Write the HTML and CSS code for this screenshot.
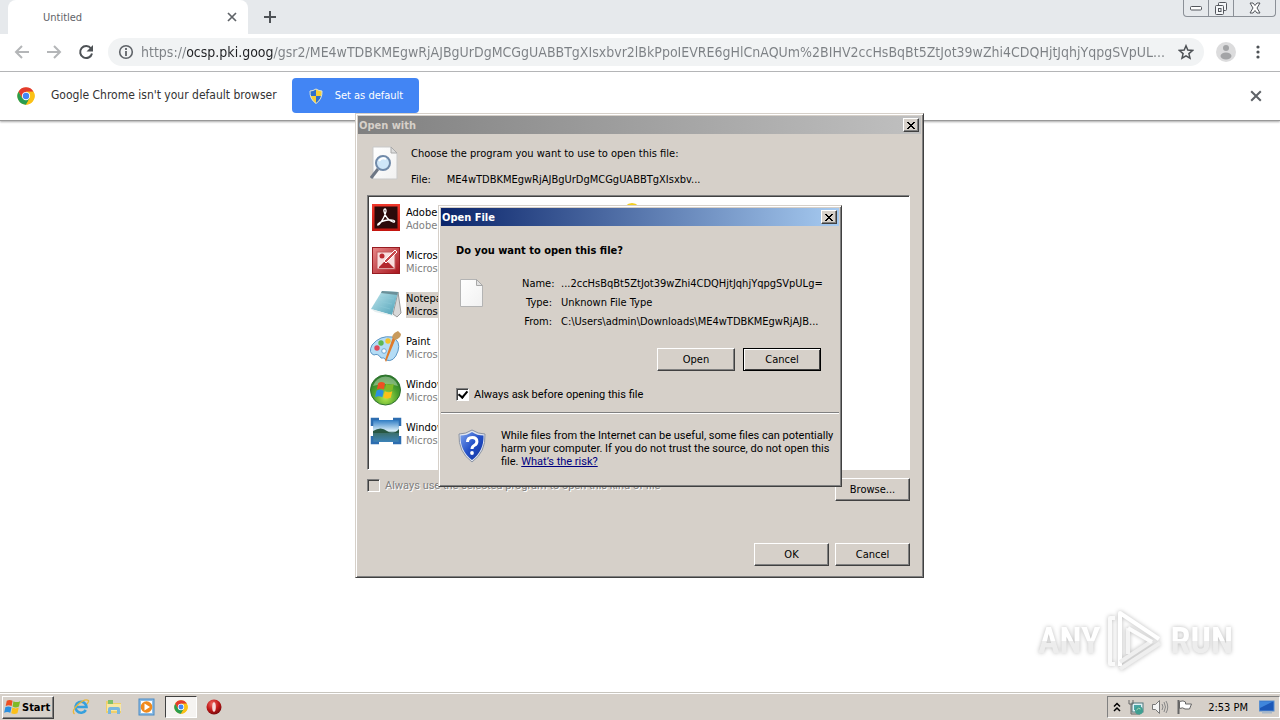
FILE: index.html
```html
<!DOCTYPE html>
<html lang="en">
<head>
<meta charset="utf-8">
<title>Untitled</title>
<link rel="stylesheet" href="styles.css">
</head>
<body>
<svg class="defs" aria-hidden="true">
  <defs>
    <linearGradient id="pdfRed" x1="0" y1="0" x2="0" y2="1"><stop offset="0" stop-color="#f0382c"/><stop offset="1" stop-color="#c4150f"/></linearGradient>
    <linearGradient id="officeRed" x1="0" y1="0" x2="1" y2="1"><stop offset="0" stop-color="#e8898a"/><stop offset="1" stop-color="#a8141c"/></linearGradient>
    <linearGradient id="pad" x1="0" y1="0" x2="1" y2="1"><stop offset="0" stop-color="#c3e8ee"/><stop offset="1" stop-color="#4b9fb6"/></linearGradient>
    <radialGradient id="orb" cx=".5" cy=".75" r=".7"><stop offset="0" stop-color="#b6e84e"/><stop offset=".6" stop-color="#4aa02c"/><stop offset="1" stop-color="#2b7a2a"/></radialGradient>
    <linearGradient id="sky" x1="0" y1="0" x2="0" y2="1"><stop offset="0" stop-color="#2e7cc4"/><stop offset=".5" stop-color="#d9eef8"/><stop offset=".58" stop-color="#3b6f6a"/><stop offset="1" stop-color="#3c83b8"/></linearGradient>
    <linearGradient id="shieldBlue" x1="0" y1="0" x2="1" y2="1"><stop offset="0" stop-color="#7fa4ee"/><stop offset=".5" stop-color="#2350c8"/><stop offset="1" stop-color="#12309a"/></linearGradient>
    <linearGradient id="paper" x1="0" y1="0" x2="1" y2="1"><stop offset="0" stop-color="#fff"/><stop offset="1" stop-color="#f1f1f1"/></linearGradient>
    <radialGradient id="opera" cx=".4" cy=".3" r=".7"><stop offset="0" stop-color="#f06a62"/><stop offset=".6" stop-color="#c01818"/><stop offset="1" stop-color="#7c0a0c"/></radialGradient>
    <symbol id="chrome" viewBox="0 0 48 48">
      <circle cx="24" cy="24" r="23" fill="#fbc116"/>
      <path d="M4 12.500A23 23 0 0 1 44 12.500H24L14 30Z" fill="#e33b2e"/>
      <path d="M4 12.500A23 23 0 0 0 24 47L34 30H14Z" fill="#2a9d4f"/>
      <path d="M24 12.500H44A23 23 0 0 1 24 47L34 30Z" fill="#fbc116"/>
      <circle cx="24" cy="24" r="11" fill="#fff"/><circle cx="24" cy="24" r="8.500" fill="#4386f5"/>
    </symbol>
    <symbol id="flag" viewBox="0 0 20 18">
      <path d="M3 2Q6 0 9.500 2L8.500 8Q5 6 1.800 8Z" fill="#ee4f22"/>
      <path d="M10.500 2.500Q14 4.500 18 2.500L16.700 8.500Q13 10.500 9.500 8.500Z" fill="#7fba28"/>
      <path d="M1.500 9Q5 7.500 8.300 9.200L7 15.500Q3.500 13.500 0 15.500Z" fill="#2a8fe0"/>
      <path d="M9.300 9.700Q13 11.500 16.500 9.700L15 16Q11.500 17.500 8 16Z" fill="#fcc01a"/>
    </symbol>
    <symbol id="winclose" viewBox="0 0 10 9"><path d="M1 1h2v1h1v1h2V2h1V1h2v1H8v1H7v1H6v1h1v1h1v1h1v1H7V7H6V6H4v1H3v1H1V7h1V6h1V5h1V4H3V3H2V2H1z" fill="#000"/></symbol>
    <symbol id="cross" viewBox="0 0 10 10"><path d="M1 1l8 8M9 1l-8 8" stroke="#5f6368" stroke-width="1.700" fill="none"/></symbol>
  </defs>
</svg>

<div class="screen">
  <header class="tabstrip">
    <div class="tab"><span>Untitled</span><button class="plain" aria-label="Close tab"><svg width="10" height="10"><use href="#cross"/></svg></button></div>
    <button class="plain newtab" aria-label="New tab"><svg width="12" height="12" viewBox="0 0 12 12"><path d="M6 0v12M0 6h12" stroke="#4e5256" stroke-width="2"/></svg></button>
    <div class="winctl">
      <button aria-label="Minimize"><svg width="14" height="6" viewBox="0 0 14 6"><rect x="1.500" y="1.500" width="11" height="3.500" rx="1" fill="#fff" stroke="#53565c"/></svg></button>
      <button aria-label="Restore"><svg width="14" height="13" viewBox="0 0 14 13"><g fill="#f4f6f8" stroke="#53565c"><rect x="4.500" y=".5" width="8" height="8" rx="1"/><rect x="1.500" y="3.500" width="8" height="9" rx="1"/><rect x="4.500" y="6.500" width="2.500" height="3"/></g></svg></button>
      <button class="wide" aria-label="Close"><svg width="14" height="12" viewBox="0 0 14 12"><path d="M2 1h3l2 2.500L9 1h3L9 6l3 5H9L7 8.500 5 11H2l3-5z" fill="#fff" stroke="#53565c"/></svg></button>
    </div>
  </header>

  <nav class="toolbar">
    <button class="plain" aria-label="Back"><svg width="16" height="16" viewBox="0 0 16 16"><path d="M15 8H2M8 2L2 8l6 6" fill="none" stroke="#b4b6b8" stroke-width="2"/></svg></button>
    <button class="plain" aria-label="Forward"><svg width="16" height="16" viewBox="0 0 16 16"><path d="M1 8h13M8 2l6 6-6 6" fill="none" stroke="#b4b6b8" stroke-width="2"/></svg></button>
    <button class="plain" aria-label="Reload"><svg width="16" height="16" viewBox="0 0 16 16"><path d="M13 4.500A6 6 0 1 0 14 9.500" fill="none" stroke="#4e5256" stroke-width="2"/><path d="M15 1v6.500H8.500z" fill="#4e5256"/></svg></button>
    <div class="omnibox">
      <svg width="16" height="16" viewBox="0 0 16 16"><circle cx="8" cy="8" r="6.300" fill="none" stroke="#5f6368" stroke-width="1.600"/><path d="M8 7v5M8 4v2" stroke="#5f6368" stroke-width="1.800"/></svg>
      <input class="url" type="text" aria-label="Address" value="https://ocsp.pki.goog/gsr2/ME4wTDBKMEgwRjAJBgUrDgMCGgUABBTgXIsxbvr2lBkPpoIEVRE6gHlCnAQUm%2BIHV2ccHsBqBt5ZtJot39wZhi4CDQHjtJqhjYqpgSVpUL...">
      <button class="plain" aria-label="Bookmark"><svg width="16" height="16" viewBox="0 0 16 16"><path d="M8 1.800l1.800 4.300 4.700.4-3.600 3.100 1.100 4.600L8 11.800l-4 2.400 1.100-4.600L1.500 6.500l4.700-.4z" fill="none" stroke="#4e5256" stroke-width="1.500"/></svg></button>
    </div>
    <button class="plain avatar" aria-label="Profile"><svg width="20" height="20" viewBox="0 0 20 20"><circle cx="10" cy="10" r="10" fill="#dcdcdd"/><circle cx="10" cy="6" r="3" fill="#a3a4a6"/><ellipse cx="10" cy="14" rx="5.500" ry="3.500" fill="#a3a4a6"/></svg></button>
    <button class="plain menu" aria-label="Menu"><svg width="4" height="14" viewBox="0 0 4 14"><g fill="#4e5256"><circle cx="2" cy="2" r="1.600"/><circle cx="2" cy="7" r="1.600"/><circle cx="2" cy="12" r="1.600"/></g></svg></button>
  </nav>

  <section class="infobar">
    <svg width="18" height="18"><use href="#chrome"/></svg>
    <span class="infotext">Google Chrome isn't your default browser</span>
    <button class="setdefault"><svg width="16" height="16" viewBox="0 0 16 16"><path d="M8 1Q11 3 14 3Q14.500 11 8 15.500Q1.500 11 2 3Q5 3 8 1Z" fill="#f6cf36"/><path d="M8 1Q5 3 2 3Q1.800 6 2.500 8H8z" fill="#2f6fcb"/><path d="M8 8h5.500Q12 13 8 15.500z" fill="#2f6fcb"/><path d="M8 1Q11 3 14 3Q14.500 11 8 15.500Q1.500 11 2 3Q5 3 8 1Z" fill="none" stroke="#dfe5d6"/></svg>Set as default</button>
    <button class="plain dismiss" aria-label="Dismiss"><svg width="12" height="12"><use href="#cross"/></svg></button>
  </section>

  <main class="page">
    <div class="watermark" aria-label="ANY RUN"><span>ANY</span>
      <svg width="56" height="64" viewBox="0 0 56 64"><g stroke-linejoin="round" fill="none" stroke-width="4"><path d="M8 9H3v46h5" stroke="#fafafa"/><path d="M13 57V4L52 30" stroke="#fff"/><path d="M13 60L53 34M13 53L45 32" stroke="#efefef"/><path d="M21 19v26" stroke="#f4f4f4"/><path d="M21 19L45 33" stroke="#fcfcfc"/></g></svg>
    <span>RUN</span></div>
  </main>

  <footer class="taskbar">
    <button class="start"><svg width="18" height="16"><use href="#flag"/></svg>Start</button>
    <div class="quick">
      <button class="plain" aria-label="Internet Explorer"><svg width="18" height="18" viewBox="0 0 18 18"><path d="M13.800 12A5.500 5.500 0 1 1 14.500 9H5" fill="none" stroke="#36a0dd" stroke-width="2.600"/><path d="M2.500 16Q-1 13 6 6.500T16.500 2.500Q17 4 15 6" fill="none" stroke="#e9b73a" stroke-width="1.300"/></svg></button>
      <button class="plain" aria-label="Explorer"><svg width="18" height="18" viewBox="0 0 18 18"><path d="M1 3h6l1 2h8v10H1z" fill="#efcf6a"/><path d="M3 2h5v4H3z" fill="#7fc069"/><path d="M2 6h14v7H2z" fill="#f8e7a2"/><path d="M3 16v-5q0-2 2-2h8q2 0 2 2v5h-3v-4H6v4z" fill="#79b7df"/></svg></button>
      <button class="plain" aria-label="Media Player"><svg width="18" height="18" viewBox="0 0 18 18"><rect x="1" y="1" width="15" height="16" fill="#8cbde6" stroke="#4a8ac4"/><rect x="3" y="3" width="11" height="12" fill="#fff"/><circle cx="8.500" cy="9" r="5.800" fill="#f08a1c"/><path d="M6.500 5.500v7l5.500-3.500z" fill="#fff"/></svg></button>
      <button class="active" aria-label="Chrome"><svg width="14" height="14"><use href="#chrome"/></svg></button>
      <button class="plain" aria-label="Opera"><svg width="16" height="16" viewBox="0 0 16 16"><circle cx="8" cy="8" r="7.500" fill="url(#opera)"/><ellipse cx="8" cy="8" rx="1.800" ry="4.800" fill="#f6dcdc"/></svg></button>
    </div>
    <div class="tray">
      <svg width="8" height="11" viewBox="0 0 8 11"><path d="M1 4.500l3-3 3 3M1 9l3-3 3 3" fill="none" stroke="#000" stroke-width="1.500"/></svg>
      <svg width="16" height="16" viewBox="0 0 16 16"><rect x="4" y="4" width="11" height="9" fill="#dff1f5" stroke="#53767c"/><path d="M6 6h7v5H6z" fill="#4aa5a5"/><path d="M1 1v4h4V1M3 5v10h9" fill="none" stroke="#666"/><circle cx="11" cy="11.500" r="4" fill="#3f9f91"/><path d="M8.500 11q2-3 4-1" stroke="#b8e0c0" fill="none"/></svg>
      <svg width="18" height="16" viewBox="0 0 18 16"><path d="M1.500 5.500h3l4-4v13l-4-4h-3z" fill="#f4f4f4" stroke="#777"/><path d="M11 5q2 3 0 6M13 3q3 5 0 10M15 2q3.500 6 0 12" fill="none" stroke="#888"/></svg>
      <svg width="17" height="16" viewBox="0 0 17 16"><path d="M2.500 1v14" stroke="#666" stroke-width="2"/><path d="M3.500 2.500q4-1.500 6 .5v2h6l-2 5H9q-2-2-5.500-.5z" fill="#fff" stroke="#666"/></svg>
      <time>2:53 PM</time>
      <svg width="16" height="14" viewBox="0 0 16 14"><rect x=".5" y="1" width="14.500" height="10" fill="#1c58b8" stroke="#5a8fd0"/><path d="M1 1.500h13L1 8z" fill="#3f86dc"/><path d="M3 12.500h10" stroke="#a8b8c8" stroke-width="2"/></svg>
    </div>
  </footer>

  <section class="window openwith" role="dialog" aria-label="Open with">
    <div class="titlebar"><span>Open with</span><button class="btn x" aria-label="Close"><svg width="10" height="9"><use href="#winclose"/></svg></button></div>
    <div class="owbody">
      <div class="intro">
        <svg width="30" height="35" viewBox="0 0 30 35"><path d="M3 1h18l6 6v26H3z" fill="url(#paper)" stroke="#c9c9c9"/><path d="M21 1v6h6z" fill="#ddd" stroke="#aaa"/><path d="M8 23l-7 9" stroke="#6d7684" stroke-width="3"/><circle cx="13" cy="17" r="7" fill="#cfe6f8" stroke="#7089a8" stroke-width="2"/><path d="M9 15q3-4 7-2" stroke="#fff" stroke-width="2" fill="none"/></svg>
        <div class="introtext"><p>Choose the program you want to use to open this file:</p><p class="file"><span>File:</span><span>ME4wTDBKMEgwRjAJBgUrDgMCGgUABBTgXIsxbv...</span></p></div>
      </div>
      <ul class="programs">
        <li><svg width="30" height="30" viewBox="0 0 30 30"><rect x="1" y="2" width="28" height="27" fill="url(#pdfRed)"/><rect x="3.500" y="4.500" width="23" height="22" fill="#2c0a0a"/><path d="M14 7q-2 0-.5 4Q15 17 22 20q2 .5 1.500-1T17 18Q11 18.500 7 22q-1 2 1 .5Q13 17 15 9.500 15.200 7 14 7z" fill="none" stroke="#fff" stroke-width="1.300"/></svg><div><b>Adobe</b><i>Adobe</i></div></li>
        <li><svg width="30" height="30" viewBox="0 0 30 30"><rect x="1.500" y="2.500" width="27" height="26" fill="url(#officeRed)" stroke="#971b20"/><rect x="6" y="7" width="18" height="17" fill="#f8dede" stroke="#c25a5c"/><path d="M8 22l6-6 4 2 5 5H8z" fill="#b3272d"/><path d="M13 16L24 5l2 2-11 11z" fill="#c94a4d" stroke="#fff"/><circle cx="11" cy="11" r="2.500" fill="#bb2b31"/></svg><div><b>Microsoft</b><i>Microsoft</i></div></li>
        <li class="selected"><svg width="30" height="30" viewBox="0 0 30 30"><path d="M27 4l3 21-4 4-4-3z" fill="#d8d8d8" stroke="#999"/><path d="M11 3l16 1-6 23L0 21z" fill="url(#pad)"/><path d="M11 3l16 1-1 3-16-2z" fill="#6b9099"/><path d="M0 21l21 6 5 2-22-5z" fill="#e6eff0"/><path d="M9 9l14 2M7 13l14 3M5 17l14 4" stroke="#8fcbd8" stroke-width=".5"/></svg><div><b>Notepad</b><i>Microsoft</i></div></li>
        <li><svg width="32" height="32" viewBox="0 -2 32 32"><path d="M2 12Q10 2 22 4Q31 8 28 18Q24 30 16 27Q14 24 11 25Q8 20 4 22Q-2 20 2 12z" fill="#b4dcf5" stroke="#5b95c4"/><circle cx="14" cy="18" r="2.300" fill="#fff" stroke="#71a5cf"/><circle cx="7" cy="15" r="2.700" fill="#e0485a"/><circle cx="11" cy="10" r="2.700" fill="#5bb753"/><circle cx="18" cy="8" r="2.700" fill="#f3c32a"/><path d="M26 5L16 29l-1-2L23 4z" fill="#e07a2a"/><path d="M22 4q1-4 6-6l3 3q0 4-6 6z" fill="#c89a5c"/></svg><div><b>Paint</b><i>Microsoft</i></div></li>
        <li><svg width="32" height="32" viewBox="0 0 32 32"><circle cx="15.500" cy="16" r="15" fill="url(#orb)" stroke="#2d702c"/><path d="M3 12A13 13 0 0 1 28 12Q15 8 3 12z" fill="#fff" opacity=".35"/><svg x="5" y="7" width="21" height="19"><use href="#flag"/></svg></svg><div><b>Windows</b><i>Microsoft</i></div></li>
        <li><svg width="30" height="30" viewBox="0 0 30 30"><rect x="2" y="3" width="26" height="22" fill="url(#sky)"/><path d="M2 14q8-5 14 0t12-2v4H2z" fill="#285743"/><path d="M1 9V2h7M22 2h7v7M29 19v7h-7M8 26H1v-7" fill="none" stroke="#2d6db0" stroke-width="2.500"/></svg><div><b>Windows</b><i>Microsoft</i></div></li>
        <li><svg width="32" height="30" viewBox="0 0 32 30"><path d="M1 4h16v4H1z" fill="#b6c4d2"/><circle cx="16" cy="10" r="9" fill="#f4cf22"/></svg></li>
      </ul>
      <div class="browse"><label class="disabled"><input type="checkbox" disabled>Always use the selected program to open this kind of file</label><button class="btn">Browse...</button></div>
      <div class="actions"><button class="btn">OK</button><button class="btn">Cancel</button></div>
    </div>
  </section>

  <section class="window openfile" role="dialog" aria-label="Open File">
    <div class="titlebar"><span>Open File</span><button class="btn x" aria-label="Close"><svg width="10" height="9"><use href="#winclose"/></svg></button></div>
    <div class="ofbody">
      <h1>Do you want to open this file?</h1>
      <div class="details">
        <svg width="26" height="30" viewBox="0 0 26 30"><path d="M1.500 1.500h16l6 6v21h-22z" fill="url(#paper)" stroke="#b4b4b4"/><path d="M17.500 1.500v6h6z" fill="#e2e2e2" stroke="#a8a8a8"/></svg>
        <dl><dt>Name:</dt><dd>...2ccHsBqBt5ZtJot39wZhi4CDQHjtJqhjYqpgSVpULg=</dd><dt>Type:</dt><dd>Unknown File Type</dd><dt>From:</dt><dd>C:\Users\admin\Downloads\ME4wTDBKMEgwRjAJB...</dd></dl>
      </div>
      <div class="actions"><button class="btn">Open</button><button class="btn default">Cancel</button></div>
      <label><input type="checkbox" checked>Always ask before opening this file</label>
    </div>
    <div class="warning">
      <svg width="28" height="34" viewBox="0 0 28 34"><path d="M14 1Q20 5 27 5Q28 23 14 33Q0 23 1 5Q8 5 14 1z" fill="#dfe4ee" stroke="#8b93a3"/><path d="M14 3Q19 6.500 25.500 6.500Q26 22 14 31Q2 22 2.500 6.500Q9 6.500 14 3z" fill="url(#shieldBlue)"/><path d="M9.500 13q0-4.500 4.700-4.500t4.700 4q0 2.500-2.400 3.800T14 20" fill="none" stroke="#fff" stroke-width="3"/><circle cx="14" cy="24" r="1.900" fill="#fff"/></svg>
      <p>While files from the Internet can be useful, some files can potentially<br>harm your computer. If you do not trust the source, do not open this<br>file. <a href="#">What’s the risk?</a></p>
    </div>
  </section>
</div>
</body>
</html>
```
FILE: styles.css
```css
* { box-sizing: border-box; }
body, p, ul, dl, dd, h1 { margin: 0; padding: 0; }
body, button, input {
  font-family: "DejaVu Sans Condensed", "Noto Sans", sans-serif;
  font-size: 11px;
  line-height: 13px;
  color: #000;
}
svg { display: block; flex: none; }
.defs { position: absolute; width: 0; height: 0; }
.screen { position: relative; display: flex; flex-direction: column; height: 100vh; min-height: 600px; overflow: hidden; background: #fff; }
.plain { display: flex; align-items: center; justify-content: center; padding: 0; border: 0; background: none; }

.tabstrip { display: flex; align-items: flex-start; height: 34px; padding: 0 4px 0 8px; background: #e6e9ec; }
.tab { display: flex; align-items: center; justify-content: space-between; width: 240px; height: 34px; padding: 0 11px 0 35px; border-radius: 8px 8px 0 0; background: #fff; color: #5f6368; }
.newtab { width: 44px; height: 34px; }
.winctl { display: flex; margin-left: auto; height: 17px; border: 1px solid #8b9097; border-top: 0; border-radius: 0 0 4px 4px; }
.winctl button { display: flex; align-items: center; justify-content: center; width: 25px; padding: 0; border: 0; border-right: 1px solid #8b9097; background: none; }
.winctl .wide { width: 41px; border-right: 0; }

.toolbar { display: flex; align-items: center; gap: 16px; height: 38px; padding: 0 20px 1px 14px; border-bottom: 1px solid #b5b6b8; background: #fff; }
.omnibox { display: flex; flex: 1; align-items: center; gap: 7px; height: 28px; margin-left: -2px; padding: 0 10px; border-radius: 14px; background: #f1f3f4; }
.url { flex: 1; min-width: 0; height: 20px; padding: 0; border: 0; outline: 0; font-size: 14px; line-height: 20px; color: transparent; background: linear-gradient(90deg, #7c8084 46px, #202124 46px, #202124 132px, #7c8084 132px); background-clip: text; -webkit-background-clip: text; }
.avatar { margin-left: -4px; }
.menu { margin-left: 4px; }

.infobar { display: flex; align-items: center; height: 49px; padding: 0 18px 1px 17px; border-bottom: 1px solid #999; box-shadow: 0 1px 2px #aaa; }
.infotext { margin: 0 15px 0 16px; font-size: 12px; color: #333; }
.setdefault { display: flex; align-items: center; gap: 11px; height: 35px; padding: 0 16px; border: 0; border-radius: 4px; background: #4285f4; color: #fff; }
.dismiss { margin-left: auto; }

.page { display: flex; flex: 1; align-items: flex-end; justify-content: flex-end; padding: 0 47px 19px; }
.watermark { display: flex; align-items: center; gap: 7px; font-family: "Liberation Sans Narrow", "Roboto Condensed", Roboto, sans-serif; font-size: 36px; line-height: 44px; font-weight: 700; filter: drop-shadow(0 0 2px #bbb); }
.watermark span { color: transparent; background: linear-gradient(#fff 50%, #ededed 50%); background-clip: text; -webkit-background-clip: text; }

.taskbar { display: flex; align-items: center; height: 28px; padding: 2px 0 1px 2px; border-top: 1px solid #c8c5be; background: #d6d0c9; box-shadow: inset 0 1px #fff; }
.start { display: flex; align-items: center; height: 23px; padding: 0 3px 0 1px; border: 1px solid; border-color: #fff #404040 #404040 #fff; background: #d6d0c9; box-shadow: inset -1px -1px #808080; font-weight: 700; }
.quick { display: flex; align-items: center; gap: 15px; padding-left: 18px; }
.active { display: flex; align-items: center; justify-content: center; width: 32px; height: 22px; margin: 0 -6px; border: 1px solid; border-color: #404040 #fff #fff #404040; background: #f5f3f1; }
.tray { display: flex; align-items: center; gap: 7px; height: 22px; margin-left: auto; padding: 0 4px 0 5px; border: 1px solid; border-color: #808080 #fff #fff #808080; }
.tray time { margin: 0 4px 0 8px; }

.window { position: absolute; padding: 2px; border: 1px solid; border-color: #d6d0c9 #404040 #404040 #d6d0c9; background: #d6d0c9; box-shadow: inset 1px 1px #fff, inset -1px -1px #808080; }
.titlebar { display: flex; align-items: center; justify-content: space-between; height: 18px; padding: 0 2px 0 1px; font-weight: 700; color: #d6d0c9; background: linear-gradient(90deg, #808080, #c0c0c0); }
.btn { height: 23px; width: 75px; padding: 0; border: 1px solid; border-color: #fff #404040 #404040 #fff; background: #d6d0c9; box-shadow: inset -1px -1px #808080; }
.x { display: flex; align-items: center; justify-content: center; width: 16px; height: 14px; }
.window label { display: flex; align-items: center; gap: 5px; }
.window input { appearance: none; width: 13px; height: 13px; margin: 0; border: 1px solid; border-color: #808080 #fff #fff #808080; background: #fff; box-shadow: inset 1px 1px #404040; }
.window input:checked::after { content: ""; display: block; width: 4px; height: 7px; margin: 0 auto; border: solid #000; border-width: 0 2px 2px 0; transform: rotate(40deg); }
.window .disabled input { background: #d6d0c9; }
.disabled { padding-top: 1px; color: #808080; text-shadow: 1px 1px #fff; }

.openwith { left: 355px; top: 113px; width: 569px; }
.owbody { padding: 12px 11px 9px 9px; }
.intro { display: flex; gap: 11px; padding-left: 3px; }
.introtext { display: flex; flex-direction: column; gap: 13px; padding-top: 1px; }
.file { display: flex; gap: 16px; }
.programs { display: grid; grid-template-rows: repeat(6, 43px); grid-auto-flow: column; grid-auto-columns: 246px; height: 275px; margin-top: 9px; padding: 6px 2px; list-style: none; background: #fff; border: 1px solid; border-color: #808080 #fff #fff #808080; box-shadow: inset 1px 1px #404040; overflow: hidden; }
.programs li { display: flex; align-items: flex-start; gap: 4px; }
.programs li > svg { width: 32px; }
.programs div { padding-top: 4px; }
.programs b, .programs i { display: block; font-weight: 400; font-style: normal; }
.programs i { color: #808080; }
.programs .selected div { background: #d6d0c9; margin-top: 4px; padding-top: 0; height: 26px; }
.programs .selected i { color: #000; }
.browse { display: flex; align-items: flex-start; justify-content: space-between; padding-top: 8px; }
.actions { display: flex; justify-content: flex-end; gap: 6px; }
.owbody > .actions { margin-top: 42px; }

.openfile { left: 438px; top: 205px; width: 404px; }
.openfile .titlebar { color: #fff; background: linear-gradient(90deg, #0a246a, #a6caf0); }
.ofbody { padding: 18px 18px 11px 15px; border-bottom: 1px solid #808080; }
.ofbody h1 { font-size: 11px; line-height: 13px; }
.details { display: flex; gap: 37px; padding: 18px 0 0 3px; }
.details > svg { margin-top: 3px; }
dl { display: grid; grid-template-columns: 30px auto; column-gap: 9px; row-gap: 6px; padding-top: 2px; white-space: nowrap; }
dt { text-align: right; }
.ofbody .actions { gap: 8px; padding-top: 20px; }
.ofbody .btn { width: 78px; }
.ofbody .default { border-color: #000; box-shadow: inset 1px 1px #fff, inset -1px -1px #404040; }
.ofbody label { padding-top: 17px; }
.window label, .warning p { font-family: Roboto, "DejaVu Sans Condensed", sans-serif; }
.warning { display: flex; gap: 15px; padding: 15px 0 16px 17px; border-top: 1px solid #fff; }
.warning p { white-space: nowrap; }
.warning a { color: #000080; }
```
